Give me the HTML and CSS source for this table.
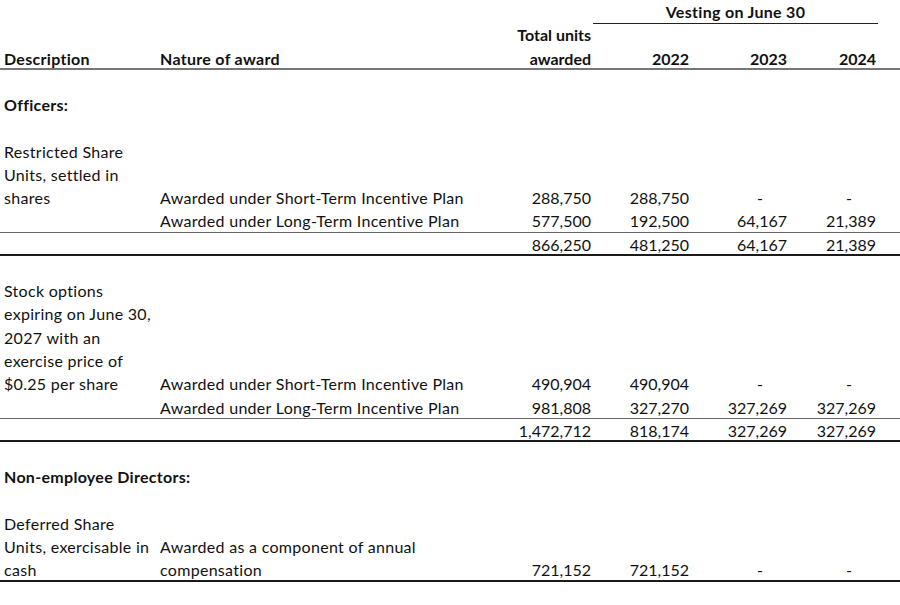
FILE: index.html
```html
<!DOCTYPE html>
<html>
<head>
<meta charset="utf-8">
<link rel="stylesheet" href="styles.css">
</head>
<body>
<div class="table">
  <div class="row">
    <div class="c"></div><div class="c"></div><div class="c"></div>
    <div class="c span3 b vest">Vesting on June 30</div>
  </div>
  <div class="row">
    <div class="c"></div><div class="c"></div><div class="c num b">Total units</div>
    <div class="c"></div><div class="c"></div><div class="c"></div>
  </div>
  <div class="row head">
    <div class="c b">Description</div><div class="c b">Nature of award</div><div class="c num b">awarded</div>
    <div class="c num b">2022</div><div class="c num b">2023</div><div class="c num b">2024</div>
  </div>
  <div class="row"></div>
  <div class="row"><div class="c b">Officers:</div></div>
  <div class="row"></div>
  <div class="row"><div class="c">Restricted Share</div></div>
  <div class="row"><div class="c">Units, settled in</div></div>
  <div class="row">
    <div class="c">shares</div><div class="c">Awarded under Short-Term Incentive Plan</div>
    <div class="c num">288,750</div><div class="c num">288,750</div><div class="c num dash">-</div><div class="c num dash">-</div>
  </div>
  <div class="row thin">
    <div class="c"></div><div class="c">Awarded under Long-Term Incentive Plan</div>
    <div class="c num">577,500</div><div class="c num">192,500</div><div class="c num">64,167</div><div class="c num">21,389</div>
  </div>
  <div class="row thick">
    <div class="c"></div><div class="c"></div>
    <div class="c num">866,250</div><div class="c num">481,250</div><div class="c num">64,167</div><div class="c num">21,389</div>
  </div>
  <div class="row"></div>
  <div class="row"><div class="c">Stock options</div></div>
  <div class="row"><div class="c">expiring on June 30,</div></div>
  <div class="row"><div class="c">2027 with an</div></div>
  <div class="row"><div class="c">exercise price of</div></div>
  <div class="row">
    <div class="c">$0.25 per share</div><div class="c">Awarded under Short-Term Incentive Plan</div>
    <div class="c num">490,904</div><div class="c num">490,904</div><div class="c num dash">-</div><div class="c num dash">-</div>
  </div>
  <div class="row thin">
    <div class="c"></div><div class="c">Awarded under Long-Term Incentive Plan</div>
    <div class="c num">981,808</div><div class="c num">327,270</div><div class="c num">327,269</div><div class="c num">327,269</div>
  </div>
  <div class="row thick">
    <div class="c"></div><div class="c"></div>
    <div class="c num">1,472,712</div><div class="c num">818,174</div><div class="c num">327,269</div><div class="c num">327,269</div>
  </div>
  <div class="row"></div>
  <div class="row"><div class="c b">Non-employee Directors:</div></div>
  <div class="row"></div>
  <div class="row"><div class="c">Deferred Share</div></div>
  <div class="row">
    <div class="c">Units, exercisable in</div><div class="c">Awarded as a component of annual</div>
  </div>
  <div class="row thick">
    <div class="c">cash</div><div class="c">compensation</div>
    <div class="c num">721,152</div><div class="c num">721,152</div><div class="c num dash">-</div><div class="c num dash">-</div>
  </div>
</div>
</body>
</html>
```
FILE: styles.css
```css
html, body {
  margin: 0;
  padding: 0;
  background: #ffffff;
}
body {
  font-family: Lato, "Open Sans", "Liberation Sans", sans-serif;
  font-size: 16px;
  color: #111111;
}
.table {
  width: 900px;
  padding-top: 0;
}
.row {
  display: grid;
  grid-template-columns: 156px 341px 98px 98px 98px 89px 20px;
  height: 23.27px;
  box-sizing: border-box;
}
.c {
  line-height: 23px;
  white-space: nowrap;
  padding-left: 4px;
  letter-spacing: 0.3px;
}
.num {
  text-align: right;
  padding-left: 0;
  padding-right: 4px;
  letter-spacing: 0;
}
.dash {
  padding-right: 28px;
}
.b {
  font-weight: 700;
}
.span3 {
  grid-column: 4 / 7;
}
.vest {
  text-align: center;
  padding-left: 0;
  margin-left: -2px;
  margin-right: 2px;
  border-bottom: 1px solid #222222;
  height: 23px;
}
.head {
  border-bottom: 2px solid #777777;
}
.thin {
  border-bottom: 1px solid #666666;
}
.thick {
  border-bottom: 2px solid #1a1a1a;
}
```
